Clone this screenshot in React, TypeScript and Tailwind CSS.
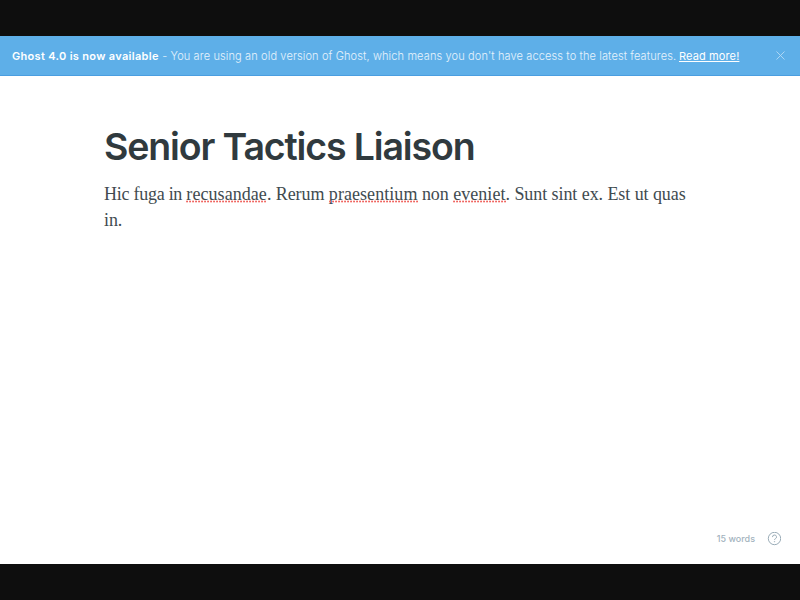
import React from "react";

function Misspelled({ children }: { children: string }) {
  return (
    <span className="relative inline-block tracking-[0.06px]">
      {children}
      <svg className="absolute bottom-[3px] left-0 h-[3px] w-full overflow-visible" aria-hidden="true">
        <line x1="1" y1="0.5" x2="100%" y2="0.5" stroke="#f0645f" strokeWidth="1.9" strokeLinecap="round" strokeDasharray="0.1 2.9" />
      </svg>
    </span>
  );
}

export default function App() {
  return (
    <div className="flex h-[600px] w-[800px] flex-col overflow-hidden bg-[#0e0e0e] py-9 font-['Inter',sans-serif]">
      <header className="flex h-10 shrink-0 items-center justify-between border-b border-[#4a9ee0] bg-[#5eafe8] pr-[15.500px] pl-3 text-[11px] text-white">
        <p className="flex pt-[2px] whitespace-pre">
          <span className="w-[147px] font-semibold tracking-[0.31px]">Ghost 4.0 is now available</span>
          <span className="w-[520px] font-light tracking-[0.125px] text-white/85"> - You are using an old version of Ghost, which means you don't have access to the latest features. </span>
          <span className="tracking-[0.12px] underline">Read more!</span>
        </p>
        <svg className="size-[9px]" viewBox="0 0 9 9" stroke="#b5daf5" strokeWidth="0.9" aria-label="Close">
          <path d="M.5.5l8 8M8.500.5l-8 8" />
        </svg>
      </header>
      <main className="flex grow flex-col bg-white px-[104px] pt-[48px]">
        <h1 className="h-[48px] text-[37.500px] leading-[46px] font-semibold tracking-[-1.14px] whitespace-nowrap text-[#303a3e]">Senior Tactics Liaison</h1>
        <p className="mt-[9px] font-['Liberation_Serif',serif] text-[18px] leading-[26px] tracking-[-0.07px] whitespace-nowrap text-[#414b50]">
          <span className="tracking-[-0.26px]">Hic fuga in </span><Misspelled>recusandae</Misspelled>. Rerum <Misspelled>praesentium</Misspelled> non <Misspelled>eveniet</Misspelled>. Sunt sint ex. Est ut quas<br />in.
        </p>
        <footer className="-mr-[85px] mt-auto mb-[18px] flex items-center justify-end gap-[12px] text-[9px] font-medium text-[#a3b3be]">
          <span>15 words</span>
          <svg className="size-[14px]" viewBox="0 0 14 14" fill="none" stroke="#8fa3af" strokeWidth="0.9">
            <circle cx="7.500" cy="6.500" r="6.2" />
            <path d="M5.500 5.100a2 2 0 1 1 2.800 1.700c-.6.3-.8.6-.8 1.100" />
            <circle cx="7.500" cy="9.700" r=".25" />
          </svg>
        </footer>
      </main>
    </div>
  );
}
